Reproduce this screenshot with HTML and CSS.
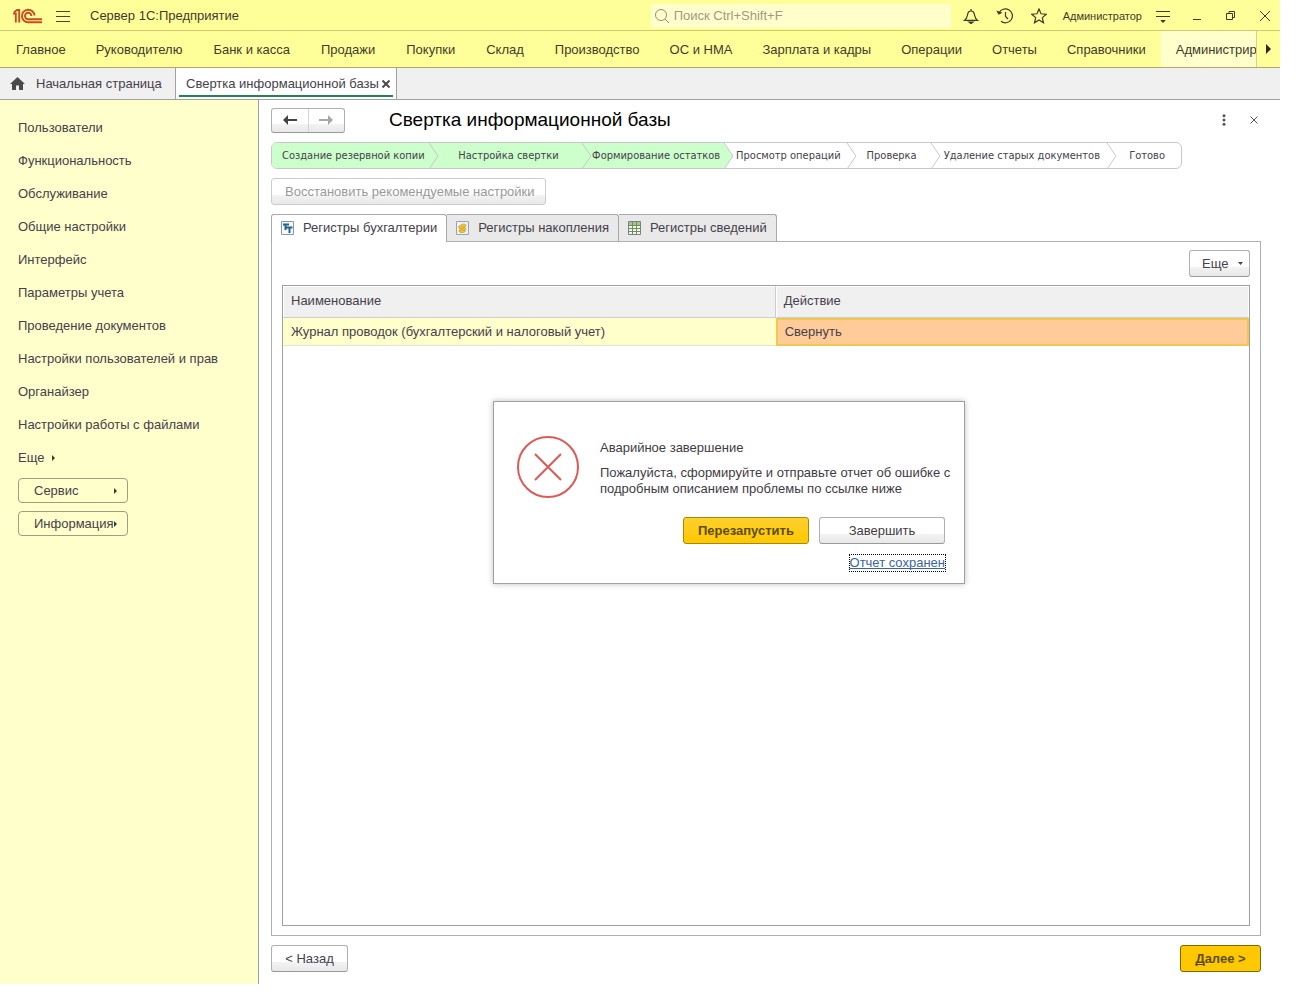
FILE: index.html
```html
<!DOCTYPE html>
<html lang="ru">
<head>
<meta charset="utf-8">
<title>Сервер 1С:Предприятие</title>
<link rel="stylesheet" href="styles.css">
</head>
<body>
<div class="app">
  <header class="titlebar">
    <svg class="logo" width="30" height="16" viewBox="0 0 30 16" fill="none" stroke="#cf4a22" stroke-width="1.9" aria-hidden="true">
      <path d="M0 5.500H2.800V14.500M1 4.200L4 2H6.200V14.500"/>
      <path d="M21.500 7.500A6.300 6.300 0 1 0 15.200 14.300H29"/>
      <path d="M18.400 8A3.200 3.200 0 1 0 15.200 11.200H29"/>
    </svg>
    <button class="icon-btn burger" aria-label="Меню"><svg width="14" height="12" viewBox="0 0 14 12" stroke="#4a4632" aria-hidden="true"><path d="M0 1.500H14M0 6.500H14M0 11.500H14"/></svg></button>
    <span class="app-name">Сервер 1С:Предприятие</span>
    <label class="search">
      <svg width="16" height="16" viewBox="0 0 16 16" fill="none" stroke="#8f8f78" aria-hidden="true"><circle cx="7" cy="7" r="5.500"/><path d="M11 11l4 4"/></svg>
      <input type="text" placeholder="Поиск Ctrl+Shift+F" aria-label="Поиск">
    </label>
    <div class="tools">
      <button class="icon-btn" aria-label="Уведомления"><svg width="16" height="16" viewBox="0 0 16 16" fill="none" stroke="#3c3a28" stroke-width="1.200" aria-hidden="true"><path d="M1.500 12.400C4.500 10 4 8 5 5C5.500 3.400 6.500 3 8 3S10.500 3.400 11 5C12 8 11.500 10 14.500 12.400ZM8 3V1"/><path d="M6 14H10L8 15.500Z" fill="#3c3a28"/></svg></button>
      <button class="icon-btn" aria-label="История"><svg width="18" height="16" viewBox="0 0 18 16" fill="none" stroke="#3c3a28" stroke-width="1.200" aria-hidden="true"><path d="M3 5A7 7 0 1 1 5 13.300M9.500 4V8.500L12 11"/><path d="M1.500 3.500L2.800 6L5 4.800Z" fill="#3c3a28"/></svg></button>
      <button class="icon-btn" aria-label="Избранное"><svg width="16" height="16" viewBox="0 0 16 16" fill="none" stroke="#3c3a28" stroke-width="1.200" aria-hidden="true"><path d="M8 1L10 5.800L15.300 6.200L11.300 9.600L12.500 14.800L8 12L3.500 14.800L4.700 9.600L.7 6.200L6 5.800Z"/></svg></button>
      <a class="user" href="#">Администратор</a>
      <button class="icon-btn" aria-label="Сервис и настройки"><svg width="14" height="14" viewBox="0 0 14 14" stroke="#3c3a28" aria-hidden="true"><path d="M0 2.500H14M0 7.500H14"/><path d="M5 11.500H9L7 13.500Z" fill="#3c3a28"/></svg></button>
    </div>
    <div class="window-btns">
      <button class="icon-btn" aria-label="Свернуть окно"><svg width="10" height="10" viewBox="0 0 10 10" stroke="#3c3a28" aria-hidden="true"><path d="M1 8.500H9"/></svg></button>
      <button class="icon-btn" aria-label="Восстановить окно"><svg width="10" height="10" viewBox="0 0 10 10" fill="none" stroke="#3c3a28" aria-hidden="true"><path d="M.5 2.500H6.500V8.500H.5ZM3 2.500V.5H8.500V6.500H7"/></svg></button>
      <button class="icon-btn" aria-label="Закрыть окно"><svg width="10" height="10" viewBox="0 0 10 10" stroke="#3c3a28" aria-hidden="true"><path d="M0 0L10 10M10 0L0 10"/></svg></button>
    </div>
  </header>

  <nav class="sections" aria-label="Разделы">
    <div class="section-list">
      <a href="#">Главное</a><a href="#">Руководителю</a><a href="#">Банк и касса</a><a href="#">Продажи</a><a href="#">Покупки</a><a href="#">Склад</a><a href="#">Производство</a><a href="#">ОС и НМА</a><a href="#">Зарплата и кадры</a><a href="#">Операции</a><a href="#">Отчеты</a><a href="#">Справочники</a><a class="current" href="#">Администрирование</a>
    </div>
    <button class="scroll-right" aria-label="Прокрутить вправо"><svg width="5" height="10" viewBox="0 0 5 10" fill="#2b2a1c" aria-hidden="true"><path d="M0 0L5 5L0 10Z"/></svg></button>
  </nav>

  <nav class="windows" aria-label="Открытые окна">
    <a class="window-tab home" href="#"><svg width="15" height="14" viewBox="0 0 15 14" fill="#4a4a4a" aria-hidden="true"><path d="M7.500 0L15 7H13V13H9V8.500H6V13H2V7H0Z"/></svg>Начальная страница</a>
    <div class="window-tab active"><a href="#">Свертка информационной базы</a><button class="icon-btn" aria-label="Закрыть вкладку"><svg width="8" height="8" viewBox="0 0 8 8" stroke="#4a4a4a" stroke-width="2" aria-hidden="true"><path d="M.5.5L7.500 7.500M7.500.5L.5 7.500"/></svg></button></div>
  </nav>

  <div class="workspace">
    <aside class="sidebar">
      <a href="#">Пользователи</a>
      <a href="#">Функциональность</a>
      <a href="#">Обслуживание</a>
      <a href="#">Общие настройки</a>
      <a href="#">Интерфейс</a>
      <a href="#">Параметры учета</a>
      <a href="#">Проведение документов</a>
      <a href="#">Настройки пользователей и прав</a>
      <a href="#">Органайзер</a>
      <a href="#">Настройки работы с файлами</a>
      <a class="more" href="#">Еще<svg width="3" height="6" viewBox="0 0 3 6" fill="#3c3a28" aria-hidden="true"><path d="M0 0L3 3L0 6Z"/></svg></a>
      <button class="side-btn">Сервис<svg width="3" height="6" viewBox="0 0 3 6" fill="#3c3a28" aria-hidden="true"><path d="M0 0L3 3L0 6Z"/></svg></button>
      <button class="side-btn">Информация<svg width="3" height="6" viewBox="0 0 3 6" fill="#3c3a28" aria-hidden="true"><path d="M0 0L3 3L0 6Z"/></svg></button>
    </aside>

    <main class="content">
      <div class="form-head">
        <div class="history">
          <button aria-label="Назад"><svg width="14" height="10" viewBox="0 0 14 10" aria-hidden="true"><path d="M0 5L5 0V10Z" fill="#444"/><path d="M4 5H14" stroke="#444" stroke-width="2"/></svg></button>
          <button aria-label="Вперед" disabled><svg width="14" height="10" viewBox="0 0 14 10" aria-hidden="true"><path d="M14 5L9 0V10Z" fill="#a8a8a8"/><path d="M0 5H10" stroke="#a8a8a8" stroke-width="2"/></svg></button>
        </div>
        <h1>Свертка информационной базы</h1>
        <button class="icon-btn" aria-label="Действия"><svg width="4" height="12" viewBox="0 0 4 12" fill="#555" aria-hidden="true"><circle cx="2" cy="1.800" r="1.500"/><circle cx="2" cy="6" r="1.500"/><circle cx="2" cy="10.200" r="1.500"/></svg></button>
        <button class="icon-btn close" aria-label="Закрыть форму"><svg width="8" height="8" viewBox="0 0 8 8" stroke="#555" aria-hidden="true"><path d="M.5.5L7.500 7.500M7.500.5L.5 7.500"/></svg></button>
      </div>

      <ol class="steps">
        <li class="done">Создание резервной копии</li>
        <li class="done"><svg width="10" height="26" viewBox="0 0 10 26" aria-hidden="true"><path class="from-done" d="M0 0L9 13L0 26"/></svg>Настройка свертки</li>
        <li class="done"><svg width="10" height="26" viewBox="0 0 10 26" aria-hidden="true"><path class="from-done" d="M0 0L9 13L0 26"/></svg>Формирование остатков</li>
        <li><svg width="10" height="26" viewBox="0 0 10 26" aria-hidden="true"><path class="from-done" d="M0 0L9 13L0 26"/></svg>Просмотр операций</li>
        <li><svg width="10" height="26" viewBox="0 0 10 26" aria-hidden="true"><path d="M0 0L9 13L0 26"/></svg>Проверка</li>
        <li><svg width="10" height="26" viewBox="0 0 10 26" aria-hidden="true"><path d="M0 0L9 13L0 26"/></svg>Удаление старых документов</li>
        <li><svg width="10" height="26" viewBox="0 0 10 26" aria-hidden="true"><path d="M0 0L9 13L0 26"/></svg>Готово</li>
      </ol>

      <button class="btn restore" disabled>Восстановить рекомендуемые настройки</button>

      <div class="tabs" role="tablist">
        <button class="tab selected" role="tab" aria-selected="true"><svg width="13" height="14" viewBox="0 0 13 14" aria-hidden="true"><path d="M.5.5H12.500V13.500H.5Z" fill="#f4f8fb" stroke="#8c98a4"/><path d="M2 3.500H8M4.500 3V9M5.500 6.500H11.500M8.500 6V12" stroke="#28618c" stroke-width="2"/></svg>Регистры бухгалтерии</button>
        <button class="tab" role="tab" aria-selected="false"><svg width="13" height="14" viewBox="0 0 13 14" aria-hidden="true"><path d="M.5.5H12.500V13.500H.5Z" fill="#eef2f6" stroke="#9aa4b0"/><g fill="#f4cf3c" stroke="#b98a10" stroke-width=".6"><ellipse cx="6" cy="10" rx="3.200" ry="1.500"/><ellipse cx="7" cy="8" rx="3.200" ry="1.500"/><ellipse cx="5.500" cy="6" rx="3" ry="1.500"/><ellipse cx="7.500" cy="4.500" rx="2.500" ry="1.500"/></g></svg>Регистры накопления</button>
        <button class="tab" role="tab" aria-selected="false"><svg width="13" height="14" viewBox="0 0 13 14" aria-hidden="true"><path d="M.5.5H12.500V13.500H.5Z" fill="#f3f7e8" stroke="#76808c"/><path d="M1 1H12V4H1Z" fill="#a9c48a"/><path d="M1 4.500H12M1 7.500H12M1 10.500H12M4.500 1V13M8.500 1V13" stroke="#6f8f62"/></svg>Регистры сведений</button>
      </div>

      <section class="panel">
        <button class="btn more-btn">Еще<svg width="5" height="3" viewBox="0 0 5 3" fill="#444" aria-hidden="true"><path d="M0 0H5L2.500 3Z"/></svg></button>
        <div class="grid-frame">
          <table>
            <thead><tr><th>Наименование</th><th>Действие</th></tr></thead>
            <tbody><tr><td>Журнал проводок (бухгалтерский и налоговый учет)</td><td class="cell-active">Свернуть</td></tr></tbody>
          </table>
        </div>
      </section>

      <footer class="form-foot">
        <button class="btn">&lt; Назад</button>
        <button class="btn primary next"><u>Д</u>алее &gt;</button>
      </footer>
    </main>
  </div>

  <div class="dialog" role="alertdialog" aria-labelledby="dlg-title" aria-describedby="dlg-text">
    <svg width="62" height="62" viewBox="0 0 62 62" fill="none" stroke="#dc5a58" stroke-width="2" aria-hidden="true"><circle cx="31" cy="31" r="30"/><path d="M18 18L44 44M44 18L18 44"/></svg>
    <div class="dialog-body">
      <h2 id="dlg-title">Аварийное завершение</h2>
      <p id="dlg-text">Пожалуйста, сформируйте и отправьте отчет об ошибке с подробным описанием проблемы по ссылке ниже</p>
      <div class="dialog-btns">
        <button class="btn primary">Перезапустить</button>
        <button class="btn">Завершить</button>
      </div>
      <a class="report" href="#">Отчет сохранен</a>
    </div>
  </div>
</div>
</body>
</html>
```
FILE: styles.css
```css
* { box-sizing: border-box; }

body {
  margin: 0;
  min-height: 100vh;
  padding: 0 24px 20px 0;
  display: flex;
  background: #fff;
  color: #45414a;
  font: 13px/16px "Liberation Sans", Arial, sans-serif;
}

a { color: inherit; text-decoration: none; white-space: nowrap; }
button { font: inherit; color: inherit; margin: 0; padding: 0; white-space: nowrap; }
svg { display: block; flex: none; }

.icon-btn { border: 0; background: none; display: flex; align-items: center; justify-content: center; }

.app { position: relative; flex: 1; min-width: 0; display: flex; flex-direction: column; }

/* Title bar */
.titlebar {
  height: 31px;
  display: flex;
  align-items: center;
  padding: 1px 10px 0 13px;
  background: #ffff99;
  border-bottom: 1px solid #cfca72;
  color: #3f3b2c;
}
.burger { margin-left: 13px; }
.app-name { margin-left: 20px; }
.search {
  width: 300px;
  height: 24px;
  margin-left: auto;
  padding: 0 3px;
  display: flex;
  align-items: center;
  gap: 4px;
  background: #ffffcc;
}
.search input { flex: 1; min-width: 0; border: 0; padding: 0; background: none; font: inherit; }
.search input::placeholder { color: #9c9a88; opacity: 1; }
.tools { display: flex; align-items: center; gap: 17px; margin-left: 12px; }
.user { font-size: 11px; margin: 0 -3px 0 -1px; }
.window-btns { display: flex; align-items: center; gap: 24px; margin-left: 22px; }

/* Sections */
.sections { height: 37px; display: flex; background: #ffff99; border-bottom: 1px solid #b5a66a; color: #3f3b2c; }
.section-list { flex: 1; min-width: 0; display: flex; overflow: hidden; }
.section-list a { padding: 0 15px 0 16px; line-height: 37px; }
.section-list a:first-child { padding-right: 14px; }
.section-list a:nth-child(n+8) { padding-left: 15px; }
.section-list .current { background: #ffffcc; }
.scroll-right { width: 24px; border: 0; border-left: 1px solid #d8d484; background: none; display: flex; align-items: center; justify-content: center; }

/* Open windows */
.windows { height: 32px; display: flex; background: #f0f0f0; border-bottom: 1px solid #a0a0a0; }
.window-tab { display: flex; align-items: center; }
.home { width: 175px; padding-left: 10px; gap: 11px; }
.active { width: 222px; padding: 0 0 0 10px; gap: 3px; background: #fff linear-gradient(#278050, #278050) no-repeat center bottom 2px / calc(100% - 6px) 2px; border: 1px solid #a0a0a0; border-width: 0 1px; }

.workspace { flex: 1; display: flex; }

/* Section commands */
.sidebar { width: 259px; padding: 11px 0 0 18px; background: #ffffcc; border-right: 1px solid #a0a0a0; }
.sidebar a { display: block; line-height: 33px; }
.sidebar .more { display: flex; align-items: center; gap: 8px; }
.side-btn {
  width: 110px;
  height: 25px;
  margin: 4px 0 8px;
  padding: 0 10px 0 15px;
  display: flex;
  align-items: center;
  justify-content: space-between;
  border: 1px solid #a09c86;
  border-radius: 4px;
  background: none;
}

/* Form */
.content { flex: 1; min-width: 0; display: flex; flex-direction: column; padding: 7px 19px 12px 12px; }
.form-head { display: flex; align-items: center; height: 26px; }
.history { width: 74px; height: 25px; display: flex; border: 1px solid #b0b0b0; border-bottom-color: #999; border-radius: 3px; background: linear-gradient(#fff 65%, #f3f3f3 65%, #e8e8e8); }
.history button { flex: 1; border: 0; background: none; display: flex; align-items: center; justify-content: center; }
.history button + button { border-left: 1px solid #d4d4d4; }
h1 { flex: 1; margin: 0 0 0 44px; color: #000; font-size: 19px; line-height: 26px; font-weight: 400; }
.form-head .close { margin: 0 3px 0 24px; }

.steps {
  max-width: 911px;
  margin: 9px 0 0;
  padding: 0;
  display: grid;
  grid-template-columns: 157fr 154fr 142fr 123fr 84fr 177fr 74fr;
  border: 1px solid #c8c8c8;
  border-radius: 6px;
  overflow: hidden;
  list-style: none;
  font: 11px/25px "DejaVu Sans Condensed", "DejaVu Sans", sans-serif;
}
.steps li { position: relative; padding-left: 6px; text-align: center; white-space: nowrap; }
.steps svg { position: absolute; left: 0; top: 0; }
.steps path { fill: #fff; stroke: #c8c8c8; }
.steps .from-done { fill: #ccffcc; }
.done { background: #ccffcc; }

.btn {
  height: 27px;
  padding: 0 13px;
  border: 1px solid #b0b0b0;
  border-bottom-color: #999;
  border-radius: 3px;
  background: linear-gradient(#fff 65%, #f3f3f3 65%, #e8e8e8);
}
.btn:disabled { color: #999; border-color: #ccc; }
.primary { font-weight: 700; color: #5c4d0c; border-color: #a88a00; background: linear-gradient(#ffd02e, #ffc800); }
.restore { width: 275px; margin-top: 9px; }

.tabs { display: flex; margin-top: 9px; }
.tab {
  height: 27px;
  padding: 0 9px;
  display: flex;
  align-items: center;
  gap: 9px;
  border: 1px solid #a8a8a8;
  border-left-width: 0;
  border-bottom: 0;
  border-radius: 0 3px 0 0;
  background: #e9e9e9;
}
.tab.selected { height: 28px; margin-bottom: -1px; padding-bottom: 1px; border-left-width: 1px; border-radius: 3px 3px 0 0; background: #fff; z-index: 1; }

.panel { flex: 1; display: flex; flex-direction: column; padding: 8px 10px 9px; border: 1px solid #b0b0b0; }
.more-btn { align-self: flex-end; width: 61px; padding: 0 6px 0 12px; display: flex; align-items: center; justify-content: space-between; }
.grid-frame { flex: 1; margin-top: 8px; border: 1px solid #a0a0a0; }
table { width: 100%; border-collapse: separate; border-spacing: 0; table-layout: fixed; }
th, td { padding: 0 8px; text-align: left; font-weight: 400; }
th { height: 32px; padding: 0 7px 2px; background: #f0f0f0; border: 1px solid #fff; border-bottom-color: #ccc; border-right-color: #ccc; }
th:first-child { width: 51%; }
th + th { border-right-color: #fff; }
td { height: 28px; background: #ffffcc; border-bottom: 1px solid #e4e4d0; }
.cell-active { background: #ffcc99; border: 2px solid #f0c850; padding: 0 7px; }

.form-foot { display: flex; justify-content: space-between; margin-top: 9px; }
.form-foot .btn { min-width: 77px; }
.form-foot .next { min-width: 81px; border-color: #7a6a00; background: #ffc800; }
u { text-decoration-skip-ink: none; }

/* Crash dialog */
.dialog {
  position: absolute;
  left: 493px;
  top: 401px;
  width: 472px;
  padding: 34px 19px 12px 23px;
  display: flex;
  gap: 21px;
  background: #fff;
  border: 1px solid #a0a0a0;
  box-shadow: 0 0 6px rgba(0, 0, 0, .25);
  color: #3f3b44;
}
.dialog-body { flex: 1; display: flex; flex-direction: column; }
h2 { margin: 4px 0 9px; font: inherit; }
p { margin: 0 -10px 0 0; }
.dialog-btns { display: flex; justify-content: flex-end; gap: 10px; margin: 20px 0 11px; }
.dialog-btns .btn { width: 126px; }
.report { align-self: flex-end; outline: 1px dotted #000; color: #3a64a0; text-decoration: underline; text-decoration-skip-ink: none; }
```
